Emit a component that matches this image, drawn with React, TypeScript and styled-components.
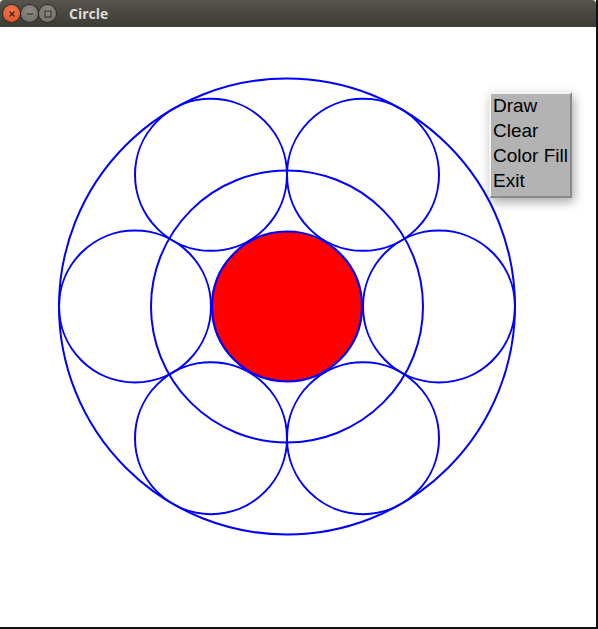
import React from "react";
import styled, { createGlobalStyle } from "styled-components";

const Global = createGlobalStyle`
  html, body { margin: 0; padding: 0; background: #ffffff; }
  body { width: 598px; height: 629px; overflow: hidden; }
`;

const Window = styled.div`
  width: 598px;
  height: 629px;
  display: flex;
  flex-direction: column;
  box-sizing: border-box;
  border-right: 2px solid #111;
  border-bottom: 2px solid #111;
  position: relative;
  background: #fff;
`;

const TitleBar = styled.div`
  height: 27px;
  flex: none;
  display: flex;
  align-items: center;
  padding-left: 3px;
  gap: 1px;
  background: linear-gradient(#56544c, #3c3b36);
  border-radius: 4px 4px 0 0;
`;

const WinButton = styled.div<{ $kind: "close" | "min" | "max" }>`
  width: 17px;
  height: 17px;
  border-radius: 50%;
  display: flex;
  align-items: center;
  justify-content: center;
  background: ${(p) =>
    p.$kind === "close"
      ? "radial-gradient(circle at 50% 35%, #f07a50, #dd4a1e)"
      : "radial-gradient(circle at 50% 35%, #8e8c86, #6c6a64)"};
  box-shadow: 0 0 0 1px #2e2d29;
`;

const Title = styled.span`
  margin-left: 12px;
  font-family: "Open Sans", "DejaVu Sans", sans-serif;
  font-weight: 700;
  font-size: 14px;
  color: #dfdbd2;
`;

const Canvas = styled.div`
  flex: 1;
  position: relative;
  background: #fff;
`;

const Drawing = styled.svg`
  display: block;
`;

const Menu = styled.div`
  position: absolute;
  left: 489px;
  top: 65px;
  width: 83px;
  box-sizing: border-box;
  background: #b3b3b3;
  border-top: 2px solid #f4f4f4;
  border-left: 2px solid #f4f4f4;
  border-right: 2px solid #8a8a8a;
  border-bottom: 2px solid #8a8a8a;
  box-shadow: 2px 4px 10px rgba(0, 0, 0, 0.35);
  padding: 0 0 2px 2px;
  display: flex;
  flex-direction: column;
`;

const MenuItem = styled.div`
  font-family: "Liberation Sans", Arial, sans-serif;
  font-size: 19px;
  line-height: 23px;
  height: 25px;
  color: #000;
  white-space: nowrap;
`;

const cx = 287;
const cy = 279.5;
const small = 76;

const smallCircles = [0, 60, 120, 180, 240, 300].map((a) => {
  const r = (a * Math.PI) / 180;
  return { x: cx + 152 * Math.cos(r), y: cy + 152 * Math.sin(r) };
});

export default function App() {
  return (
    <>
      <Global />
      <Window>
        <TitleBar>
          <WinButton $kind="close">
            <svg width="8" height="8" viewBox="0 0 8 8">
              <path d="M1.5 1.5 L6.5 6.5 M6.5 1.5 L1.5 6.5" stroke="#4a1a0a" strokeWidth="1.3" />
            </svg>
          </WinButton>
          <WinButton $kind="min">
            <svg width="8" height="8" viewBox="0 0 8 8">
              <path d="M1 4 L7 4" stroke="#3a3935" strokeWidth="1.3" />
            </svg>
          </WinButton>
          <WinButton $kind="max">
            <svg width="8" height="8" viewBox="0 0 8 8">
              <rect x="1" y="1" width="6" height="6" fill="none" stroke="#3a3935" strokeWidth="1.2" />
            </svg>
          </WinButton>
          <Title>Circle</Title>
        </TitleBar>
        <Canvas>
          <Drawing width="596" height="600" viewBox="0 0 596 600">
            <circle cx={cx} cy={cy} r={228} fill="none" stroke="#0000ff" strokeWidth="2" />
            <circle cx={cx} cy={cy} r={136} fill="none" stroke="#0000ff" strokeWidth="2" />
            {smallCircles.map((c, i) => (
              <circle key={i} cx={c.x} cy={c.y} r={small} fill="none" stroke="#0000ff" strokeWidth="2" />
            ))}
            <circle cx={cx} cy={cy} r={75} fill="#ff0000" stroke="#0000ff" strokeWidth="2.2" />
          </Drawing>
          <Menu>
            <MenuItem>Draw</MenuItem>
            <MenuItem>Clear</MenuItem>
            <MenuItem>Color Fill</MenuItem>
            <MenuItem>Exit</MenuItem>
          </Menu>
        </Canvas>
      </Window>
    </>
  );
}
